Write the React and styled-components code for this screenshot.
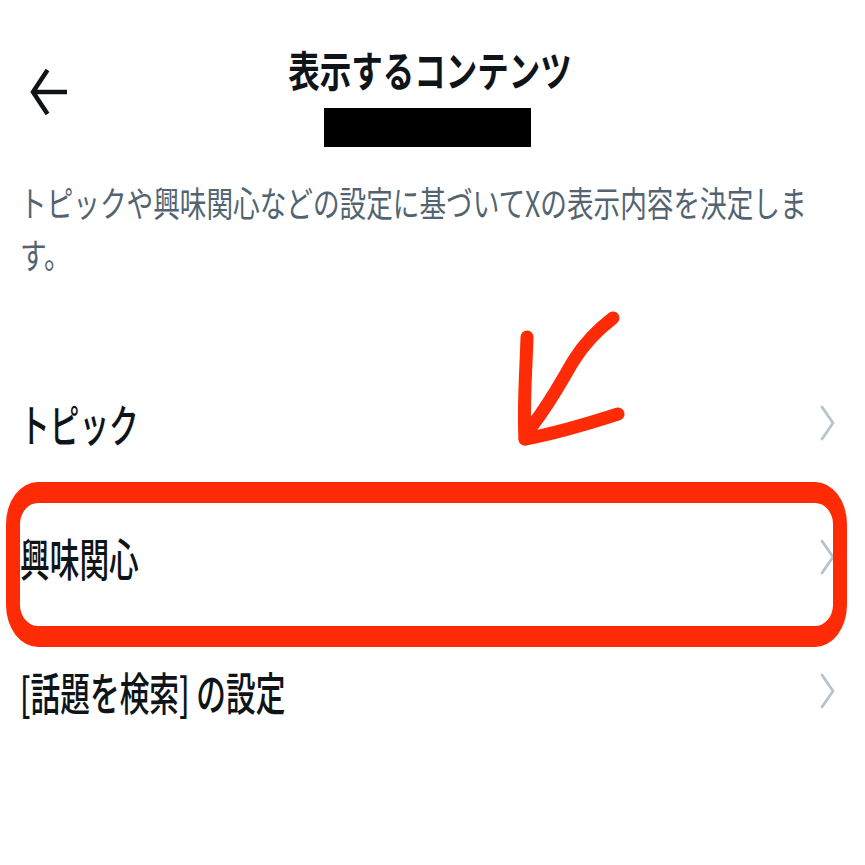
import React from "react";
import styled, { createGlobalStyle } from "styled-components";

const Global = createGlobalStyle`
  html, body { margin: 0; padding: 0; background: #ffffff; }
  body { font-family: "Noto Sans CJK JP", "Noto Sans", sans-serif; color: #0f1419; }
`;

const Page = styled.div`
  position: relative;
  width: 865px;
  height: 865px;
  box-sizing: border-box;
  padding: 0 30px 0 20px;
  overflow: hidden;
  background: #ffffff;
`;

const Header = styled.header`
  display: grid;
  grid-template-columns: 1fr auto 1fr;
  grid-template-rows: auto auto;
  padding-top: 48px;
`;

const BackButton = styled.button`
  grid-column: 1;
  grid-row: 1 / span 2;
  justify-self: start;
  align-self: start;
  margin: 20px 0 0 10px;
  padding: 0;
  border: 0;
  background: none;
  display: flex;
  color: #0f1419;
`;

const Title = styled.h1`
  grid-column: 2;
  grid-row: 1;
  margin: 0;
  font-size: 42px;
  line-height: 1;
  font-weight: 700;
  white-space: nowrap;
  transform: translateX(3px) scaleX(0.75);
  transform-origin: center;
  justify-self: center;
  color: #0f1419;
`;

const Redacted = styled.div`
  grid-column: 2;
  grid-row: 2;
  justify-self: center;
  width: 207px;
  height: 39px;
  margin-top: 18px;
  background: #000000;
`;

const Description = styled.p`
  width: 1100px;
  margin: 29px 0 0 0;
  font-size: 35.5px;
  line-height: 52px;
  font-weight: 400;
  color: #536471;
  transform: scaleX(0.75);
  transform-origin: left top;
`;

const List = styled.ul`
  list-style: none;
  margin: 76px 0 0 0;
  padding: 0;
  display: flex;
  flex-direction: column;
`;

const Row = styled.li`
  height: 134px;
  display: flex;
  align-items: center;
  justify-content: space-between;
`;

const RowLabel = styled.span`
  display: inline-block;
  font-size: 45px;
  line-height: 1;
  font-weight: 500;
  white-space: nowrap;
  color: #0f1419;
  transform: scaleX(0.66);
  transform-origin: left center;
`;

const Chevron = styled.svg`
  flex: none;
  width: 15px;
  height: 36px;
`;

const HighlightBox = styled.div`
  position: absolute;
  left: 6px;
  top: 482px;
  width: 841px;
  height: 165px;
  box-sizing: border-box;
  border-style: solid;
  border-color: #ff2b06;
  border-width: 21px 14px;
  border-radius: 32px / 42px;
  pointer-events: none;
`;

const Annotation = styled.svg`
  position: absolute;
  left: 505px;
  top: 300px;
  width: 130px;
  height: 155px;
  pointer-events: none;
`;

const rows = ["トピック", "興味関心", "[話題を検索] の設定"];

export default function App() {
  return (
    <>
      <Global />
      <Page>
        <Header>
          <BackButton aria-label="戻る">
            <svg width="40" height="48" viewBox="0 0 40 48" fill="none">
              <path d="M3 24 H37" stroke="#0f1419" strokeWidth="4.5" />
              <path d="M17.5 2 L3 24 L17.5 46" stroke="#0f1419" strokeWidth="4.5" strokeLinejoin="miter" />
            </svg>
          </BackButton>
          <Title>表示するコンテンツ</Title>
          <Redacted />
        </Header>
        <Description>
          トピックや興味関心などの設定に基づいてXの表示内容を決定します。
        </Description>
        <List>
          {rows.map((r) => (
            <Row key={r}>
              <RowLabel>{r}</RowLabel>
              <Chevron viewBox="0 0 15 36" fill="none">
                <path d="M2 2 L13 18 L2 34" stroke="#b6c4ce" strokeWidth="2.8" strokeLinecap="round" strokeLinejoin="round" />
              </Chevron>
            </Row>
          ))}
        </List>
        <HighlightBox />
        <Annotation viewBox="505 300 130 155" fill="none">
          <g stroke="#ff2b06" strokeWidth="13" strokeLinecap="round" strokeLinejoin="round">
            <path d="M613 318 C596 331 584 344 574 360 C563 378 552 400 532 426" />
            <path d="M527 337 C526 372 523 408 525 439" />
            <path d="M525 439 C558 433 590 423 618 414" />
          </g>
        </Annotation>
      </Page>
    </>
  );
}
